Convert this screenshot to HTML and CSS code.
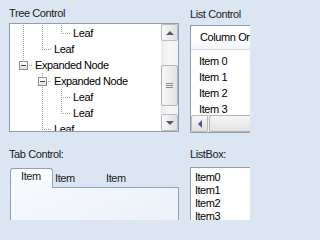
FILE: index.html
```html
<!DOCTYPE html>
<html>
<head>
<meta charset="utf-8">
<link rel="stylesheet" href="styles.css">
</head>
<body>
<div class="page">
  <section class="group tree-group">
    <div class="label">Tree Control</div>
    <div class="box tree-box">
      <div class="tree">
        <div class="row"><span class="cell pipe"></span><span class="cell pipe"></span><span class="cell elbow"></span><span class="txt">Leaf</span></div>
        <div class="row"><span class="cell pipe"></span><span class="cell elbow"></span><span class="txt">Leaf</span></div>
        <div class="row"><span class="cell exp exp-last"><span class="minus-box"><span class="minus"></span></span></span><span class="txt">Expanded Node</span></div>
        <div class="row"><span class="cell"></span><span class="cell exp exp-mid"><span class="minus-box"><span class="minus"></span></span></span><span class="txt">Expanded Node</span></div>
        <div class="row"><span class="cell"></span><span class="cell pipe"></span><span class="cell tee"></span><span class="txt">Leaf</span></div>
        <div class="row"><span class="cell"></span><span class="cell pipe"></span><span class="cell elbow"></span><span class="txt">Leaf</span></div>
        <div class="row"><span class="cell"></span><span class="cell elbow"></span><span class="txt">Leaf</span></div>
      </div>
      <div class="vscroll">
        <div class="sb-btn"><span class="arr-up"></span></div>
        <div class="vtrack"><div class="vthumb"><span class="grip"></span></div></div>
        <div class="sb-btn"><span class="arr-down"></span></div>
      </div>
    </div>
  </section>

  <section class="group list-group">
    <div class="label">List Control</div>
    <div class="box list-box">
      <div class="lc-head">Column One</div>
      <div class="lc-items">
        <div class="lc-item">Item 0</div>
        <div class="lc-item">Item 1</div>
        <div class="lc-item">Item 2</div>
        <div class="lc-item">Item 3</div>
      </div>
      <div class="hscroll">
        <div class="sb-btn hbtn"><span class="arr-left"></span></div>
        <div class="hthumb"></div>
      </div>
    </div>
  </section>

  <section class="group tab-group">
    <div class="label">Tab Control:</div>
    <div class="tabs">
      <div class="tab-strip">
        <div class="tab active">Item</div>
        <div class="tab">Item</div>
        <div class="tab">Item</div>
      </div>
      <div class="tab-panel"></div>
    </div>
  </section>

  <section class="group lb-group">
    <div class="label">ListBox:</div>
    <div class="box lb-box">
      <div class="lb-item">Item0</div>
      <div class="lb-item">Item1</div>
      <div class="lb-item">Item2</div>
      <div class="lb-item">Item3</div>
      <div class="lb-item">Item4</div>
    </div>
  </section>
</div>
</body>
</html>
```

FILE: styles.css
```css
html, body {
  margin: 0;
  padding: 0;
  background: #dce6f3;
  font-family: "Liberation Sans", Arial, sans-serif;
  font-size: 11px;
  letter-spacing: -0.4px;
  color: #000;
}

body {
  width: 250px;
  height: 220px;
  overflow: hidden;
}

.page {
  display: grid;
  grid-template-columns: 170px 60px;
  grid-template-rows: 141px 90px;
  column-gap: 11px;
  padding-left: 9px;
  padding-top: 6px;
}

.group {
  display: flex;
  flex-direction: column;
  min-width: 0;
}

.label {
  height: 14px;
  line-height: 14px;
  color: #1a1a1a;
  white-space: nowrap;
}

.box {
  background: #fff;
  border: 1px solid #8f9db3;
  box-sizing: border-box;
  overflow: hidden;
}

/* ---------- Tree ---------- */
.tree-group .label { margin-bottom: 3px; }

.tree-box {
  height: 109px;
  display: flex;
}

.tree {
  flex: 1;
  padding-top: 1px;
  overflow: hidden;
}

.row {
  display: flex;
  height: 16px;
  line-height: 16px;
  padding-left: 4px;
  white-space: nowrap;
}

.cell {
  --dv: repeating-linear-gradient(to bottom, #a2a2a2 0 1px, transparent 1px 2px);
  --dh: repeating-linear-gradient(to right, #a2a2a2 0 1px, transparent 1px 2px);
  flex: none;
  width: 19px;
  height: 16px;
}

.pipe {
  background: var(--dv) 9px 0 / 1px 16px no-repeat;
}

.tee {
  background:
    var(--dh) 11px 8px / 8px 1px no-repeat,
    var(--dv) 9px 0 / 1px 16px no-repeat;
}

.elbow {
  background:
    var(--dh) 11px 8px / 8px 1px no-repeat,
    var(--dv) 9px 0 / 1px 9px no-repeat;
}

.exp {
  display: flex;
  align-items: flex-start;
  padding-left: 5px;
  box-sizing: border-box;
}

.exp-last {
  background:
    var(--dh) 15px 8px / 4px 1px no-repeat,
    var(--dv) 9px 0 / 1px 4px no-repeat;
}

.exp-mid {
  background:
    var(--dh) 15px 8px / 4px 1px no-repeat,
    var(--dv) 9px 0 / 1px 4px no-repeat,
    var(--dv) 9px 14px / 1px 2px no-repeat;
}

.minus-box {
  margin-top: 4px;
  width: 9px;
  height: 9px;
  box-sizing: border-box;
  border: 1px solid #8e8f8f;
  background: linear-gradient(#ffffff, #e2e2e2);
  display: flex;
  align-items: center;
  justify-content: center;
}

.minus {
  width: 5px;
  height: 1px;
  background: #2c4a86;
}

.txt {
  margin-left: 2px;
}

/* ---------- Scrollbars ---------- */
.vscroll {
  flex: none;
  width: 17px;
  display: flex;
  flex-direction: column;
  background: linear-gradient(to right, #e9e9e9, #f6f6f6 40%, #f2f2f2);
}

.sb-btn {
  flex: none;
  width: 17px;
  height: 17px;
  box-sizing: border-box;
  border: 1px solid #bcbcbc;
  border-radius: 2px;
  background: linear-gradient(to right, #f7f7f7, #ececec 50%, #e0e0e0);
  display: flex;
  align-items: center;
  justify-content: center;
}

.arr-up {
  width: 0;
  height: 0;
  border-left: 4px solid transparent;
  border-right: 4px solid transparent;
  border-bottom: 4px solid #4a5b7c;
}

.arr-down {
  width: 0;
  height: 0;
  border-left: 4px solid transparent;
  border-right: 4px solid transparent;
  border-top: 4px solid #4a5b7c;
}

.arr-left {
  width: 0;
  height: 0;
  border-top: 4px solid transparent;
  border-bottom: 4px solid transparent;
  border-right: 4px solid #4a5b7c;
}

.vtrack {
  flex: 1;
}

.vthumb {
  margin-top: 24px;
  height: 41px;
  box-sizing: border-box;
  border: 1px solid #b4b4b4;
  border-radius: 2px;
  background: linear-gradient(to right, #f6f6f6, #ededed 50%, #e1e1e1);
  display: flex;
  align-items: center;
  justify-content: center;
}

.grip {
  width: 7px;
  height: 5px;
  background: repeating-linear-gradient(to bottom, #8c8c8c 0 1px, transparent 1px 2px);
}

/* ---------- List control ---------- */
.list-group .label { margin-bottom: 4px; margin-top: 1px; }

.list-box {
  width: 90px;
  height: 108px;
  border-right: none;
  display: flex;
  flex-direction: column;
}

.lc-head {
  flex: none;
  height: 23px;
  line-height: 23px;
  padding-left: 9px;
  border-bottom: 1px solid #d5dde8;
  background: linear-gradient(#ffffff, #ffffff 50%, #f2f5fa);
  white-space: nowrap;
}

.lc-items {
  flex: 1;
  padding-top: 3px;
  overflow: hidden;
}

.lc-item {
  height: 16px;
  line-height: 16px;
  padding-left: 8px;
  white-space: nowrap;
}

.hscroll {
  flex: none;
  height: 17px;
  display: flex;
  background: linear-gradient(#e9e9e9, #f6f6f6 40%, #f2f2f2);
}

.hbtn {
  background: linear-gradient(#f7f7f7, #ececec 50%, #e0e0e0);
}

.hthumb {
  flex: 1;
  margin-left: 1px;
  box-sizing: border-box;
  border: 1px solid #b4b4b4;
  border-right: none;
  border-radius: 2px 0 0 2px;
  background: linear-gradient(#f6f6f6, #ededed 50%, #e1e1e1);
}

/* ---------- Tab control ---------- */
.tab-group .label { margin-bottom: 7px; }

.tabs {
  padding-left: 1px;
  display: flex;
  flex-direction: column;
}

.tab-strip {
  display: flex;
  height: 20px;
  align-items: flex-end;
}

.tab {
  flex: none;
  width: 51px;
  height: 17px;
  line-height: 14px;
  padding-left: 2px;
  box-sizing: border-box;
  border-bottom: 1px solid #8da2c1;
  color: #1a1a1a;
}

.tab.active {
  width: 43px;
  height: 21px;
  line-height: 15px;
  padding-left: 10px;
  border: 1px solid #8da2c1;
  border-bottom: none;
  border-radius: 3px 3px 0 0;
  background: linear-gradient(#ffffff, #f3f7fc);
  margin-bottom: -1px;
}

.tab:last-child {
  flex: 1;
}

.tab-panel {
  height: 70px;
  border: 1px solid #8da2c1;
  border-top: none;
  background: linear-gradient(to bottom right, #f7f9fd, #e6eef9);
}

/* ---------- ListBox ---------- */
.lb-group .label { margin-bottom: 6px; }

.lb-box {
  width: 90px;
  height: 80px;
  border-right: none;
  padding-top: 3px;
  padding-left: 4px;
}

.lb-item {
  height: 13px;
  line-height: 13px;
  white-space: nowrap;
  letter-spacing: -0.5px;
}
```
